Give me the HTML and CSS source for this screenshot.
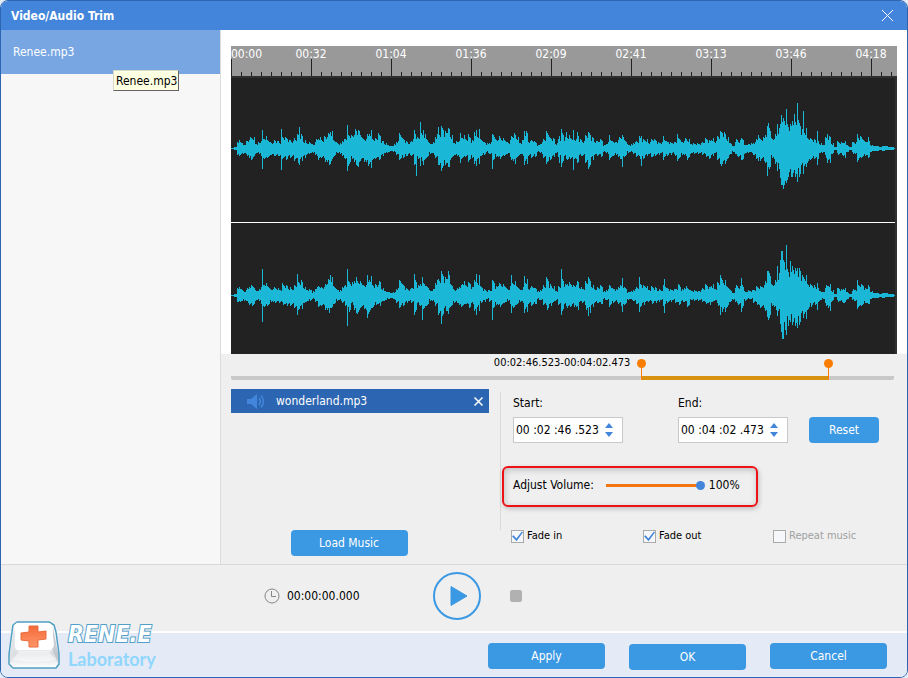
FILE: index.html
```html
<!DOCTYPE html>
<html lang="en">
<head>
<meta charset="utf-8">
<title>Video/Audio Trim</title>
<link rel="stylesheet" href="styles.css">
</head>
<body>
<div class="window">
  <header class="titlebar">
    <h1>Video/Audio Trim</h1>
    <button class="close" aria-label="Close"><svg width="13" height="13" viewBox="0 0 13 13"><path d="M1 1l11 11M12 1L1 12" stroke="#fff" fill="none"/></svg></button>
  </header>
  <div class="workspace">
    <aside class="sidebar">
      <a class="file" href="#">Renee.mp3</a>
      <div class="tooltip" role="tooltip">Renee.mp3</div>
    </aside>
    <main class="editor">
      <section class="wave-area">
        <div class="wave">
          <div class="ruler"><span>00:00</span><span>00:32</span><span>01:04</span><span>01:36</span><span>02:09</span><span>02:41</span><span>03:13</span><span>03:46</span><span>04:18</span></div>
          <svg class="channel" id="left-channel" viewBox="0 0 664 144" preserveAspectRatio="none" shape-rendering="crispEdges"><path fill="#1ab7d6"/></svg>
          <svg class="channel" id="right-channel" viewBox="0 0 664 131" preserveAspectRatio="none" shape-rendering="crispEdges"><path fill="#1ab7d6"/></svg>
        </div>
      </section>
      <section class="range">
        <div class="before">00:02:46.523-00:04:02.473</div>
        <div class="selected"><button class="pin pin-start" aria-label="Range start"></button><button class="pin pin-end" aria-label="Range end"></button></div>
        <div class="after"></div>
      </section>
      <section class="controls">
        <div class="music">
          <div class="track">
            <svg width="19" height="15" viewBox="0 0 19 15"><path d="M1 5h4l6-5v15l-6-5H1z" fill="#4385dc"/><path d="M13 4q3 3.500 0 7M15 1.500q5 6 0 12" fill="none" stroke="#4385dc" stroke-width="1.500"/></svg>
            <span>wonderland.mp3</span>
            <button class="remove" aria-label="Remove track"><svg width="9" height="9" viewBox="0 0 9 9"><path d="M.5.5l8 8M8.500.5l-8 8" stroke="#fff" stroke-width="1.500"/></svg></button>
          </div>
          <button class="btn load">Load Music</button>
        </div>
        <div class="settings">
          <div class="times">
            <div class="time">
              <label for="start">Start:</label>
              <div class="spin"><input id="start" type="text" value="00 :02 :46 .523"><div class="arrows"><button class="up" aria-label="Increase start"></button><button class="down" aria-label="Decrease start"></button></div></div>
            </div>
            <div class="time">
              <label for="end">End:</label>
              <div class="spin"><input id="end" type="text" value="00 :04 :02 .473"><div class="arrows"><button class="up" aria-label="Increase end"></button><button class="down" aria-label="Decrease end"></button></div></div>
            </div>
            <button class="btn reset">Reset</button>
          </div>
          <div class="volume">
            <label for="volume">Adjust Volume:</label>
            <input id="volume" type="range" min="0" max="100" value="100">
            <output for="volume">100%</output>
          </div>
          <div class="options">
            <label><input type="checkbox" checked>Fade in</label>
            <label><input type="checkbox" checked>Fade out</label>
            <label class="disabled"><input type="checkbox" disabled>Repeat music</label>
          </div>
        </div>
      </section>
    </main>
  </div>
  <section class="player">
    <svg width="16" height="16" viewBox="0 0 16 16" fill="none" stroke="#858585"><circle cx="8" cy="8" r="7"/><path d="M7.500 3v5.500H12"/></svg>
    <time>00:00:00.000</time>
    <button class="play" aria-label="Play"><svg width="48" height="48" viewBox="0 0 48 48"><circle cx="24" cy="24" r="23" fill="none" stroke="#3b98e3" stroke-width="2"/><path d="M18 14.500L34 24L18 33.500z" fill="#3b98e3" stroke="#3b98e3" stroke-linejoin="round"/></svg></button>
    <button class="stop" aria-label="Stop"></button>
  </section>
  <footer class="footer">
    <div class="logo">
      <svg width="52" height="50" viewBox="0 0 52 50">
        <defs>
          <linearGradient id="key" x2="0" y2="1"><stop stop-color="#fff"/><stop offset=".58" stop-color="#f1f2f4"/><stop offset=".68" stop-color="#d6d9de"/><stop offset="1" stop-color="#fff"/></linearGradient>
          <linearGradient id="side"><stop stop-color="#dfe2e6"/><stop offset="1" stop-color="#b9bec6"/></linearGradient>
          <linearGradient id="cross" x2="0" y2="1"><stop stop-color="#f46a3a"/><stop offset="1" stop-color="#ff9668"/></linearGradient>
        </defs>
        <path d="M9 2L5 5L4 12L1 34V44L5 48H48L51 44V34L48 12L46 5L41 2Z" fill="url(#key)" stroke="#519fc3" stroke-width="1.500" stroke-linejoin="round"/>
        <path d="M6 7L2 34V43L9 30ZM45 7L50 34V43L44 29Z" fill="url(#side)" opacity=".75"/>
        <path d="M10 3H40Q44 3 44 7L46 25Q45 30 41 30H11Q6 30 7 25L7 7Q7 3 10 3Z" fill="#fff"/>
        <path d="M11 31H41L47 40Q27 44 5 40Z" fill="#fff" opacity=".5"/>
        <path d="M21 6H30V12L38 11V19L30 20V27H21V21L13 20V13L21 12Z" fill="url(#cross)" stroke="#e96b3c"/>
      </svg>
      <div class="brand"><strong>RENE.E</strong><span>Laboratory</span></div>
    </div>
    <button class="btn">Apply</button><button class="btn ok">OK</button><button class="btn">Cancel</button>
  </footer>
</div>
<script src="waveform.js"></script>
</body>
</html>
```
FILE: waveform.js
```js
// Envelope samples, one every three units, above and below the centre line.
const above = [0,1,7,6,3,6,9,9,4,5,9,10,8,5,7,6,5,10,9,7,6,9,12,12,7,5,5,3,7,9,7,10,13,15,8,5,4,8,9,12,11,16,14,12,8,12,16,9,9,12,6,4,3,2,3,6,14,9,6,5,7,14,9,12,12,8,4,5,12,15,20,15,17,11,5,
6,9,11,9,11,7,16,11,8,5,4,5,14,8,10,9,8,5,11,12,9,5,7,14,6,8,6,3,5,9,15,9,8,4,8,14,9,11,10,8,12,7,6,12,14,9,6,7,8,3,5,9,6,5,9,9,7,3,3,5,7,10,8,8,5,8,7,5,5,9,6,5,5,6,9,5,8,
7,4,4,4,4,6,9,7,9,6,11,15,13,9,5,2,8,7,10,3,4,4,5,8,8,9,14,22,9,12,18,24,27,22,20,28,24,24,16,16,10,9,8,6,4,3,9,10,4,1,6,5,6,3,1,5,5,10,10,6,7,3,2,2,1,2,2,1,1,0];
const below = [0,1,6,5,4,6,9,9,4,4,8,10,8,5,6,6,6,8,9,8,8,10,12,11,7,5,4,3,6,10,8,11,14,13,7,4,4,7,9,14,8,14,16,10,11,15,15,10,8,9,6,4,3,2,3,6,10,8,6,5,6,14,8,10,12,8,4,5,9,16,17,13,15,10,6,
6,9,9,7,10,7,14,9,6,5,3,5,11,7,9,8,6,4,9,12,8,5,6,13,7,8,7,3,4,8,12,9,7,4,7,12,8,11,9,9,12,6,6,12,15,9,6,6,7,3,4,9,6,5,8,9,7,3,3,5,7,9,8,6,5,7,6,5,4,8,6,5,4,6,8,5,6,
10,4,4,4,4,5,7,8,6,4,9,14,13,11,5,3,6,8,11,4,3,3,6,8,10,10,14,20,8,12,16,26,33,26,24,26,24,24,18,17,12,9,8,8,4,3,8,12,5,1,5,5,7,3,1,4,5,10,8,6,7,3,2,2,1,2,1,1,1,0];

// Peaks: position, height above, depth below.
const leftPeaks = [[31,18,20],[50,19,21],[68,21,16],[99,16,15],[116,23,22],[127,18,18],[183,18,16],[185,9,27],[189,26,17],[192,18,16],[207,21,16],[210,22,22],[217,20,18],[229,15,14],[237,14,13],[243,16,15],[248,19,15],[261,14,20],[293,17,16],[328,12,14],[330,19,18],[335,16,10],[342,18,21],[346,16,14],[357,16,20],[378,13,11],[391,13,18],[410,12,17],[432,12,11],[446,14,12],[489,17,15],[510,10,11],[527,13,12],[536,22,27],[537,25,18],[546,24,22],[550,33,36],[551,26,36],[555,39,34],[566,45,33],[572,37,25],[575,20,18],[586,17,16],[596,14,14],[626,14,13],[637,11,9]];
const rightPeaks = [[31,26,26],[66,21,19],[99,20,12],[116,26,30],[136,20,22],[183,21,19],[191,18,24],[210,24,28],[217,24,18],[245,21,19],[248,20,15],[261,15,24],[280,20,17],[293,19,17],[330,26,19],[357,18,20],[391,17,16],[408,18,16],[433,16,17],[489,20,19],[510,17,16],[536,24,21],[546,29,20],[549,35,28],[550,44,36],[551,44,43],[552,35,43],[553,33,26],[555,50,39],[559,34,26],[566,27,32],[575,20,23],[586,12,14],[626,15,13],[637,10,8]];

function draw(id, middle, peaks, seed) {
  const peakAt = new Map(peaks.map(p => [p[0], p]));
  let path = "";
  for (let x = 0; x < 664; x++) {
    const i = Math.floor(x / 3);
    const noise = ((x * 73 + seed) * 37 % 101) / 101;
    let up = Math.round((above[i] || 0) * (0.75 + 0.5 * noise));
    let down = Math.round((below[i] || 0) * (0.75 + 0.5 * ((noise + 0.2) % 1)));
    const peak = peakAt.get(x);
    if (peak) { up = peak[1]; down = peak[2]; }
    path += `M${x} ${middle - up}h1v${up + down + 1}h-1z`;
  }
  document.querySelector(id + " path").setAttribute("d", path);
}
draw("#left-channel", 70, leftPeaks, 5);
draw("#right-channel", 72, rightPeaks, 19);
```
FILE: styles.css
```css
* { box-sizing: border-box; }
body {
  margin: 0;
  background: #e4ebf7;
  color: #000;
  font-family: "DejaVu Sans Condensed", "Noto Sans", sans-serif;
  font-size: 12px;
  line-height: 16px;
}
button, input { font: inherit; color: inherit; }
button { padding: 0; border: 0; background: none; }
svg { display: block; }

.window {
  display: flex;
  flex-direction: column;
  min-height: 100vh;
  overflow: hidden;
  border: 1px solid #2c66b0;
  border-radius: 8px;
  background: #efefef;
}
.titlebar {
  display: flex;
  align-items: center;
  justify-content: space-between;
  height: 29px;
  padding: 0 13px 0 10px;
  background: #4285da;
  color: #fff;
}
.titlebar h1 { margin: 0; font-size: 12px; }

.workspace { display: flex; flex: 1; }
.sidebar {
  position: relative;
  width: 220px;
  border-right: 1px solid #dcdcdc;
  background: #f7f7f7;
}
.file {
  display: flex;
  align-items: center;
  height: 44px;
  padding-left: 12px;
  background: #77a6e3;
  color: #fff;
  text-decoration: none;
}
.tooltip {
  position: absolute;
  top: 40px;
  left: 112px;
  padding: 2px 1px 1px 2px;
  border: 1px solid #d8d8c8;
  border-right-color: #646464;
  border-bottom-color: #646464;
  background: #ffffe1;
}

.editor { display: flex; flex: 1; flex-direction: column; min-width: 0; }
.wave-area { padding: 16px 10px 0; background: #fff; }
.wave { background: #222; border-right: 2px solid #303030; }
.ruler {
  display: grid;
  grid-template-columns: 40px repeat(8, 80px);
  height: 32px;
  margin-right: -2px;
  overflow: hidden;
  border-bottom: 2px solid #303030;
  background:
    repeating-linear-gradient(90deg, #222 0 1px, transparent 1px 80px) 0 13px / 100% 17px no-repeat,
    repeating-linear-gradient(90deg, #222 0 1px, transparent 1px 10px) 0 26px / 100% 4px no-repeat,
    #999;
  color: #fff;
  text-align: center;
}
.ruler span:first-child { text-align: left; }
.channel { width: 100%; height: 131px; }
#left-channel { height: 145px; border-bottom: 1px solid #fff; }

.range {
  display: grid;
  grid-template-columns: 411fr 187fr 66fr;
  height: 26px;
  margin: 0 13px 0 10px;
}
.before {
  padding: 1px 11px 0 0;
  border-bottom: 4px solid #c8c8c8;
  border-radius: 2px;
  font-size: 11px;
  text-align: right;
}
.selected { position: relative; border-bottom: 4px solid #d9920f; }
.after { border-bottom: 4px solid #c8c8c8; border-radius: 2px; }
.pin {
  position: absolute;
  top: 5px;
  width: 9px;
  height: 21px;
  background: linear-gradient(#fa7d00, #fa7d00) 4px 0 / 1px 100% no-repeat;
}
.pin::before {
  content: "";
  position: absolute;
  top: 0;
  left: 0;
  width: 9px;
  height: 9px;
  border-radius: 50%;
  background: #fa7d00;
}
.pin-start { left: -4px; }
.pin-end { right: -5px; }

.controls { display: flex; flex: 1; padding: 9px 0 8px 10px; }
.music { display: flex; flex-direction: column; justify-content: space-between; width: 258px; }
.track {
  display: flex;
  align-items: center;
  gap: 11px;
  height: 24px;
  padding: 0 6px 0 15px;
  background: #2c66b2;
  color: #fff;
}
.remove { margin-left: auto; }
.btn {
  width: 117px;
  height: 26px;
  border-radius: 4px;
  background: #3b98e3;
  color: #fff;
}
.load { align-self: center; margin-right: 22px; }
.settings {
  flex: 1;
  margin-left: 11px;
  background: linear-gradient(#d9d9d9, #d9d9d9) 0 3px / 1px 138px no-repeat;
}
.times { display: flex; align-items: flex-end; padding: 6px 0 0 13px; }
.time { width: 165px; }
.time label { display: block; margin-bottom: 6px; }
.spin {
  display: flex;
  align-items: center;
  width: 110px;
  height: 26px;
  border: 1px solid #c8c8c8;
  background: #fff;
}
.spin input { width: 91px; padding: 0 0 0 2px; border: 0; outline: 0; background: none; }
.arrows { display: grid; gap: 4px; }
.arrows button { width: 8px; height: 5px; background: #4285da; }
.up { clip-path: polygon(50% 0, 100% 100%, 0 100%); }
.down { clip-path: polygon(0 0, 100% 0, 50% 100%); }
.times .reset { width: 70px; margin-left: -34px; }
.volume {
  display: flex;
  align-items: center;
  width: 256px;
  height: 41px;
  margin: 23px 0 0 2px;
  padding: 0 0 3px 9px;
  border: 2px solid #ee1116;
  border-radius: 6px;
  box-shadow: 1px 2px 5px #0003, inset 1px 2px 6px #0003;
}
.volume input {
  width: 99px;
  height: 10px;
  margin: 0 4px 0 12px;
  appearance: none;
  background: linear-gradient(#f27710, #f27710) 0 4px / 95px 3px no-repeat;
}
.volume input::-webkit-slider-thumb {
  width: 9px;
  height: 9px;
  appearance: none;
  border-radius: 50%;
  background: #4285da;
}
.options {
  display: grid;
  grid-template-columns: 132px 130px 1fr;
  margin: 21px 0 0 11px;
  font-size: 11px;
}
.options label { display: flex; align-items: center; gap: 3px; }
.options input {
  width: 13px;
  height: 13px;
  margin: 0;
  appearance: none;
  border: 1px solid #aaa;
  background: #f5f7fa;
}
.options input:checked::before {
  content: "";
  display: block;
  width: 11px;
  height: 11px;
  background: #4285da;
  clip-path: polygon(0 52%, 14% 44%, 40% 72%, 90% 8%, 100% 15%, 42% 98%);
}
.disabled { color: #a0a0a0; }

.player {
  display: flex;
  align-items: center;
  height: 69px;
  padding: 0 0 5px 263px;
  border-top: 1px solid #d9d9d9;
  border-bottom: 2px solid #fff;
}
.player time { width: 146px; margin-left: 7px; }
.stop { width: 12px; height: 12px; margin-left: 29px; border-radius: 2px; background: #b1b1b1; }
.footer {
  position: relative;
  display: flex;
  justify-content: flex-end;
  gap: 24px;
  height: 44px;
  padding: 10px 20px 0;
  background: #e4ebf7;
}
.ok { margin-top: 1px; }
.logo { position: absolute; left: 7px; bottom: 7px; display: flex; gap: 8px; }
.brand { display: flex; flex-direction: column; }
.brand strong {
  color: #fff;
  font: italic bold 23px/28px "DejaVu Sans Condensed", sans-serif;
  -webkit-text-stroke: 2px #529fca;
  paint-order: stroke fill;
}
.brand span { color: #91d6fd; font: bold 18px/22px Lato, sans-serif; }
```
